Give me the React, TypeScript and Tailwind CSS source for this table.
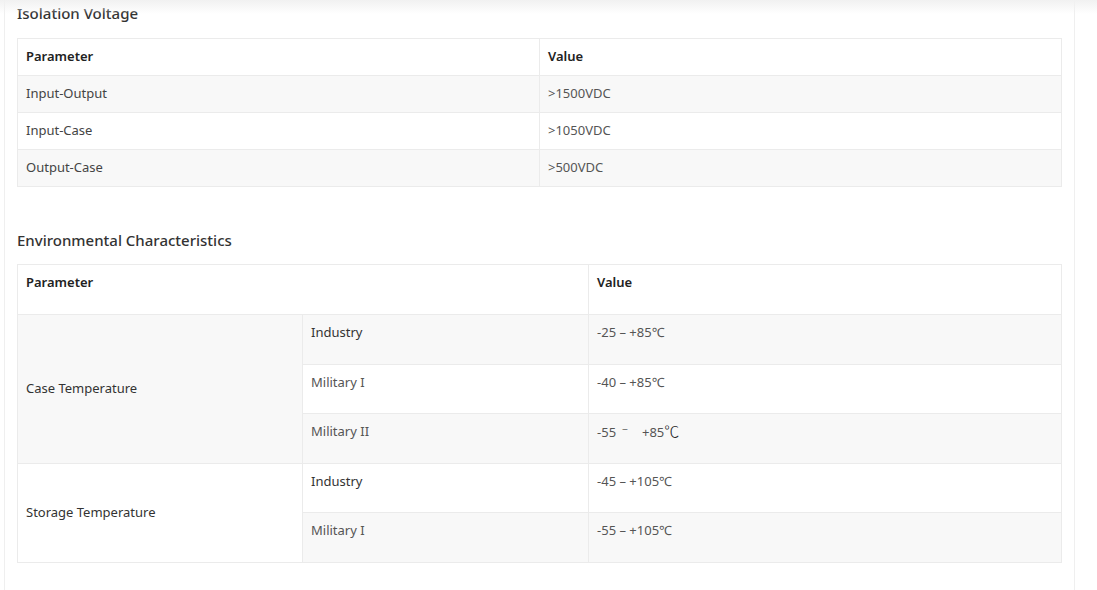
import React from "react";

const font = { fontFamily: '"Noto Sans", "Liberation Sans", sans-serif' };

function Title({ children }: { children: React.ReactNode }) {
  return (
    <h3 className="text-[15px] leading-[22px] font-medium text-[#333]">{children}</h3>
  );
}

export default function App() {
  const t1 = [
    ["Input-Output", ">1500VDC"],
    ["Input-Case", ">1050VDC"],
    ["Output-Case", ">500VDC"],
  ];
  const cell = "border border-[#ebebeb] px-[8px] text-[13px] text-left align-middle";
  const cell2 = "border border-[#ebebeb] px-[8px] pt-[7px] text-[13px] leading-[20px] text-left align-top h-[49.6px]";
  return (
    <div className="relative w-[1097px] h-[590px] overflow-hidden bg-white" style={font}>
      <div className="pointer-events-none absolute left-0 top-0 z-10 h-[14px] w-full bg-gradient-to-b from-[#f1f1f1] to-[#ffffff00]" />
      <div className="ml-[4px] h-full w-[1071px] border-l border-r border-[#efefef] pl-[12px] pr-[11px] pt-[2px]">
        <Title>Isolation Voltage</Title>
        <table className="mt-[14px] w-[1045px] border-collapse table-fixed">
          <colgroup>
            <col className="w-[522px]" />
            <col />
          </colgroup>
          <thead>
            <tr className="h-[37px] bg-white">
              <th className={cell + " font-semibold text-[#222]"}>Parameter</th>
              <th className={cell + " font-semibold text-[#222]"}>Value</th>
            </tr>
          </thead>
          <tbody>
            {t1.map((r, i) => (
              <tr key={i} className={"h-[37px] " + (i % 2 === 0 ? "bg-[#f8f8f8]" : "bg-white")}>
                <td className={cell + " text-[#444]"}>{r[0]}</td>
                <td className={cell + " text-[#555]"}>{r[1]}</td>
              </tr>
            ))}
          </tbody>
        </table>

        <div className="mt-[42px]">
          <Title>Environmental Characteristics</Title>
        </div>
        <table className="mt-[13px] w-[1045px] border-collapse table-fixed">
          <colgroup>
            <col className="w-[285px]" />
            <col className="w-[286px]" />
            <col />
          </colgroup>
          <thead>
            <tr className="bg-white">
              <th colSpan={2} className={cell2 + " font-semibold text-[#222] h-[50px]"}>Parameter</th>
              <th className={cell2 + " font-semibold text-[#222] h-[50px]"}>Value</th>
            </tr>
          </thead>
          <tbody>
            <tr className="bg-[#f8f8f8]">
              <td rowSpan={3} className="border border-[#ebebeb] px-[8px] text-[13px] text-[#333] align-middle">
                Case Temperature
              </td>
              <td className={cell2 + " text-[#333]"}>Industry</td>
              <td className={cell2 + " text-[#555]"}>-25 – +85℃</td>
            </tr>
            <tr className="bg-white">
              <td className={cell2 + " text-[#555]"}>Military I</td>
              <td className={cell2 + " text-[#555]"}>-40 – +85℃</td>
            </tr>
            <tr className="bg-[#f8f8f8]">
              <td className={cell2 + " text-[#555]"}>Military II</td>
              <td className={cell2 + " text-[#555]"}>
                -55
                <span className="relative -top-[4px] ml-[6px] mr-[14px] text-[11px]" style={{ fontFamily: '"Noto Sans CJK SC", sans-serif' }}>
                  –
                </span>
                +85
                <span className="text-[15px] font-light text-[#222]" style={{ fontFamily: '"Noto Sans CJK SC", sans-serif' }}>
                  ℃
                </span>
              </td>
            </tr>
            <tr className="bg-white">
              <td rowSpan={2} className="border border-[#ebebeb] px-[8px] text-[13px] text-[#333] align-middle">
                Storage Temperature
              </td>
              <td className={cell2 + " text-[#333]"}>Industry</td>
              <td className={cell2 + " text-[#555]"}>-45 – +105℃</td>
            </tr>
            <tr className="bg-[#f8f8f8]">
              <td className={cell2 + " text-[#555]"}>Military I</td>
              <td className={cell2 + " text-[#555]"}>-55 – +105℃</td>
            </tr>
          </tbody>
        </table>
      </div>
    </div>
  );
}
